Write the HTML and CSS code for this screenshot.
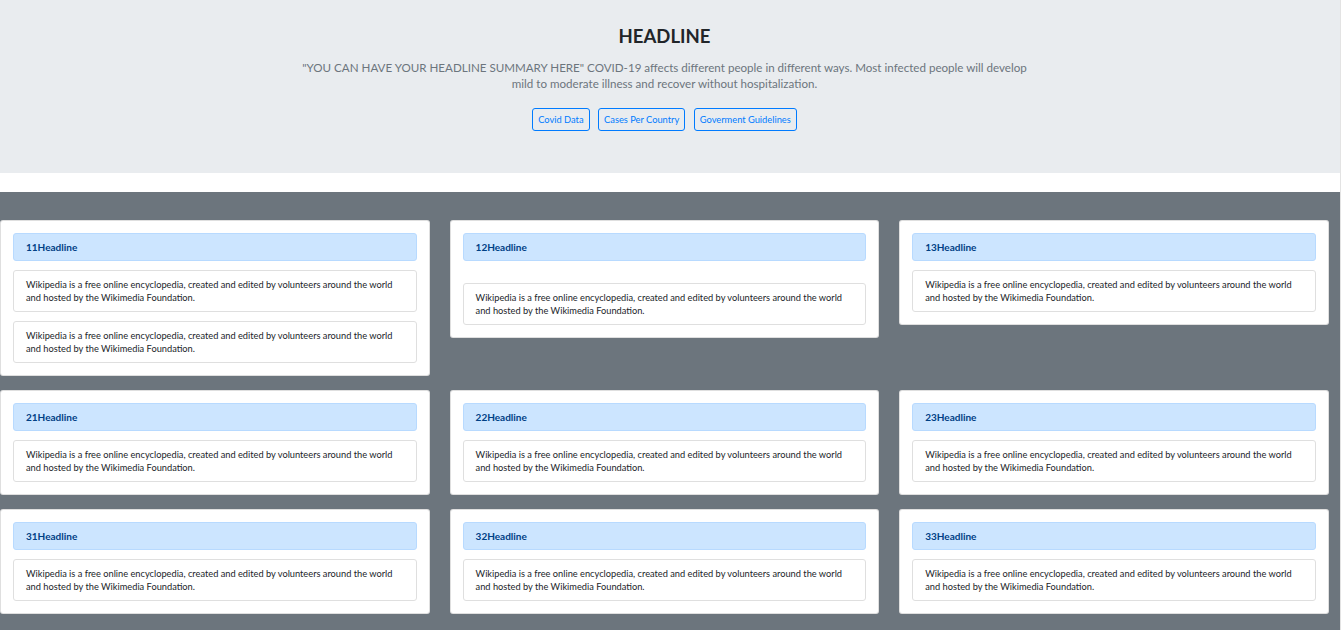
FILE: index.html
```html
<!DOCTYPE html>
<html lang="en">
<head>
<meta charset="utf-8">
<title>Headline</title>
<link rel="stylesheet" href="styles.css">
</head>
<body>
<div class="page">
  <header class="jumbo">
    <h1 class="jumbo-title">HEADLINE</h1>
    <p class="jumbo-lead">"YOU CAN HAVE YOUR HEADLINE SUMMARY HERE" COVID-19 affects different people in different ways. Most infected people will develop mild to moderate illness and recover without hospitalization.</p>
    <div class="jumbo-actions">
      <a class="btn" href="#">Covid Data</a>
      <a class="btn" href="#">Cases Per Country</a>
      <a class="btn" href="#">Goverment Guidelines</a>
    </div>
  </header>

  <main class="board">
    <div class="row">
      <section class="card">
        <div class="card-head">11Headline</div>
        <div class="card-text">Wikipedia is a free online encyclopedia, created and edited by volunteers around the world and hosted by the Wikimedia Foundation.</div>
        <div class="card-text">Wikipedia is a free online encyclopedia, created and edited by volunteers around the world and hosted by the Wikimedia Foundation.</div>
      </section>
      <section class="card">
        <div class="card-head">12Headline</div>
        <div class="card-spacer"></div>
        <div class="card-text">Wikipedia is a free online encyclopedia, created and edited by volunteers around the world and hosted by the Wikimedia Foundation.</div>
      </section>
      <section class="card">
        <div class="card-head">13Headline</div>
        <div class="card-text">Wikipedia is a free online encyclopedia, created and edited by volunteers around the world and hosted by the Wikimedia Foundation.</div>
      </section>
    </div>
    <div class="row">
      <section class="card">
        <div class="card-head">21Headline</div>
        <div class="card-text">Wikipedia is a free online encyclopedia, created and edited by volunteers around the world and hosted by the Wikimedia Foundation.</div>
      </section>
      <section class="card">
        <div class="card-head">22Headline</div>
        <div class="card-text">Wikipedia is a free online encyclopedia, created and edited by volunteers around the world and hosted by the Wikimedia Foundation.</div>
      </section>
      <section class="card">
        <div class="card-head">23Headline</div>
        <div class="card-text">Wikipedia is a free online encyclopedia, created and edited by volunteers around the world and hosted by the Wikimedia Foundation.</div>
      </section>
    </div>
    <div class="row">
      <section class="card">
        <div class="card-head">31Headline</div>
        <div class="card-text">Wikipedia is a free online encyclopedia, created and edited by volunteers around the world and hosted by the Wikimedia Foundation.</div>
      </section>
      <section class="card">
        <div class="card-head">32Headline</div>
        <div class="card-text">Wikipedia is a free online encyclopedia, created and edited by volunteers around the world and hosted by the Wikimedia Foundation.</div>
      </section>
      <section class="card">
        <div class="card-head">33Headline</div>
        <div class="card-text">Wikipedia is a free online encyclopedia, created and edited by volunteers around the world and hosted by the Wikimedia Foundation.</div>
      </section>
    </div>
  </main>
</div>
</body>
</html>
```

FILE: styles.css
```css
html, body {
  margin: 0;
  padding: 0;
  background: #ffffff;
  height: 100%;
  overflow: hidden;
}

body {
  font-family: Lato, "Open Sans", Arial, sans-serif;
  color: #212529;
}

.page {
  width: 1340px;
  min-height: 630px;
  border-right: 1px solid #e3e3e3;
}

.jumbo {
  background: #e9ecef;
  height: 173px;
  box-sizing: border-box;
  padding: 24px 11px 0 0;
  text-align: center;
}

.jumbo-title {
  margin: 0;
  font-size: 18.5px;
  line-height: 24px;
  font-weight: 700;
  color: #212529;
}

.jumbo-lead {
  margin: 12px auto 0;
  max-width: 736px;
  font-size: 11.6px;
  line-height: 16px;
  color: #6c757d;
}

.jumbo-actions {
  margin-top: 16px;
  display: flex;
  justify-content: center;
  gap: 8.5px;
}

.btn {
  display: inline-block;
  height: 23px;
  box-sizing: border-box;
  padding: 0 5px;
  line-height: 21px;
  font-size: 9.3px;
  color: #007bff;
  border: 1px solid #007bff;
  border-radius: 3px;
  text-decoration: none;
}

.board {
  margin-top: 19px;
  background: #6c757d;
  padding: 28px 0 20px;
  min-height: 420px;
  display: flex;
  flex-direction: column;
  gap: 14px;
}

.row {
  display: flex;
  align-items: flex-start;
  gap: 20px;
}

.card {
  width: 429.6px;
  box-sizing: border-box;
  background: #ffffff;
  border: 1px solid rgba(0, 0, 0, 0.125);
  border-radius: 3px;
  padding: 12px;
  display: flex;
  flex-direction: column;
  gap: 9px;
}

.card-head {
  height: 28px;
  box-sizing: border-box;
  background: #cce5ff;
  border: 1px solid #b8daff;
  border-radius: 3px;
  color: #004085;
  font-size: 10px;
  font-weight: 700;
  line-height: 27px;
  padding: 0 12px;
}

.card-spacer {
  height: 4px;
}

.card-text {
  border: 1px solid #dfdfdf;
  border-radius: 3px;
  padding: 7px 12px;
  font-size: 9.25px;
  line-height: 13px;
  color: #212529;
}
```
